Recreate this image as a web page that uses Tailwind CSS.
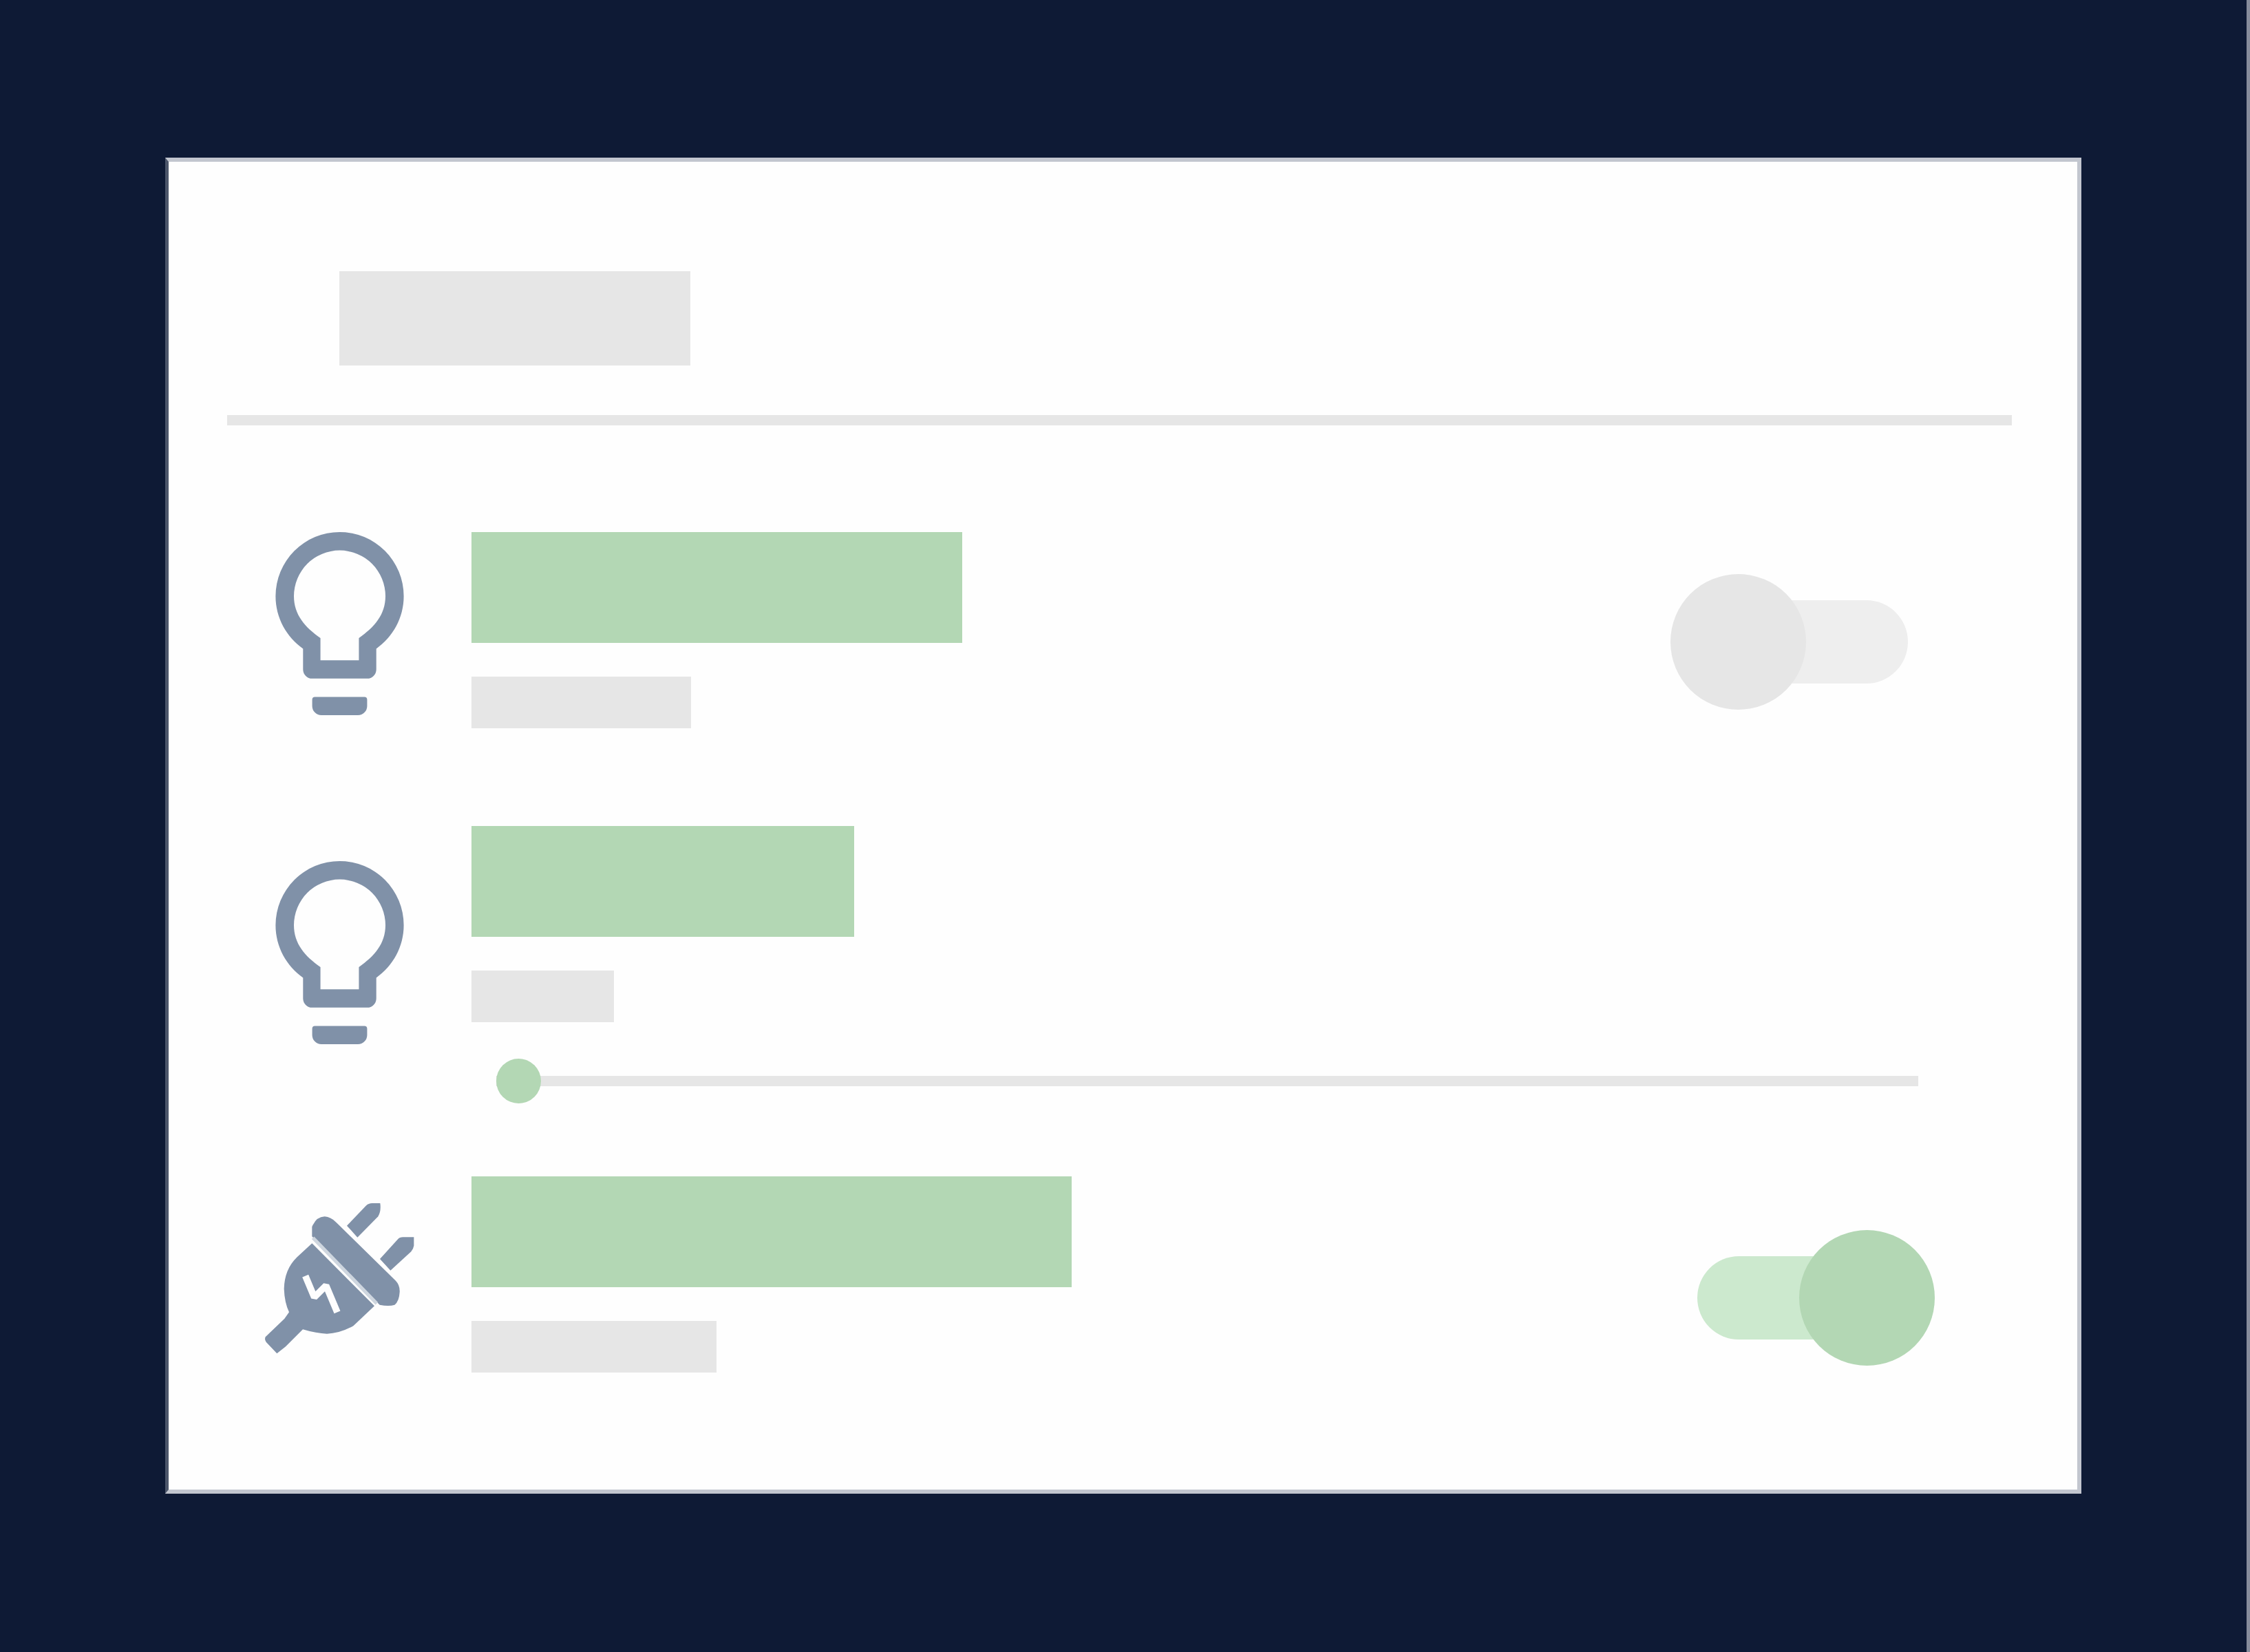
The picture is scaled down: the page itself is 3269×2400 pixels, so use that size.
<!DOCTYPE html>
<html lang="en">
<head>
<meta charset="utf-8">
<meta name="viewport" content="width=device-width, initial-scale=1">
<title>Devices</title>
<script src="https://cdn.jsdelivr.net/npm/@tailwindcss/browser@4"></script>
</head>
<body class="min-h-screen border-r-5 border-[#868c9b] bg-[#0e1a35] px-[240px] pt-[229px] pb-[220px] font-['Inter',sans-serif]">
  <svg class="hidden" aria-hidden="true">
    <symbol id="bulb" viewBox="5 2 14 20">
      <path d="M12,2A7,7 0 0,1 19,9C19,11.38 17.81,13.47 16,14.74V17A1,1 0 0,1 15,18H9A1,1 0 0,1 8,17V14.74C6.19,13.47 5,11.38 5,9A7,7 0 0,1 12,2M9,21V20.3Q9,20 9.3,20H14.7Q15,20 15,20.3V21A1,1 0 0,1 14,22H10A1,1 0 0,1 9,21M12,4A5,5 0 0,0 7,9C7,11.05 8.23,12.41 9.9,13.58V16H14.1V13.58C15.77,12.41 17,11.05 17,9A5,5 0 0,0 12,4Z"/>
    </symbol>
  </svg>
  <main class="border-6 border-l-5 border-[#c2c6cf] border-l-[#4c566b] bg-[#fefefe] pt-[159px] pb-[170px] pl-[85px]">
    <header class="mr-[95px] border-b-15 border-[#e6e6e6] pb-[72px] pl-[163px]">
      <div class="h-[137px] w-[510px] bg-[#e6e6e6]"></div>
    </header>

    <section class="flex items-start gap-[29px] pt-[155px] pr-[246px]">
      <div class="flex w-[326px] shrink-0 justify-center">
        <svg class="h-[266px] w-[187px] fill-[#8091a8]" aria-hidden="true"><use href="#bulb"/></svg>
      </div>
      <div class="flex min-w-0 flex-1 flex-col gap-[49px]">
        <div class="h-[161px] w-[713px] bg-[#b3d7b4]"></div>
        <div class="h-[75px] w-[319px] bg-[#e6e6e6]"></div>
      </div>
      <input type="checkbox" role="switch" aria-label="Light" class="mt-[61px] grid h-[197px] w-[345px] shrink-0 appearance-none items-center before:col-start-1 before:row-start-1 before:h-[121px] before:w-[247px] before:justify-self-end before:rounded-full before:bg-[#eeeeee] after:col-start-1 after:row-start-1 after:size-[197px] after:justify-self-start after:rounded-full after:bg-[#e6e6e6] checked:before:justify-self-start checked:before:bg-[#cce9ce] checked:after:justify-self-end checked:after:bg-[#b3d7b4]">
    </section>

    <section class="flex items-start gap-[29px] pt-[142px] pr-[231px]">
      <div class="mt-[51px] flex w-[326px] shrink-0 justify-center">
        <svg class="h-[266px] w-[187px] fill-[#8091a8]" aria-hidden="true"><use href="#bulb"/></svg>
      </div>
      <div class="flex min-w-0 flex-1 flex-col gap-[49px]">
        <div class="h-[161px] w-[556px] bg-[#b3d7b4]"></div>
        <div class="h-[75px] w-[207px] bg-[#e6e6e6]"></div>
        <input type="range" min="0" max="100" value="0" aria-label="Brightness" class="mt-1 ml-9 h-[65px] appearance-none bg-transparent [&::-webkit-slider-runnable-track]:h-[15px] [&::-webkit-slider-runnable-track]:bg-[#e6e6e6] [&::-webkit-slider-thumb]:-mt-[25px] [&::-webkit-slider-thumb]:size-[65px] [&::-webkit-slider-thumb]:appearance-none [&::-webkit-slider-thumb]:rounded-full [&::-webkit-slider-thumb]:bg-[#b3d7b4]">
      </div>
    </section>

    <section class="flex items-start gap-[29px] pt-[106px] pr-[207px]">
      <div class="mt-[39px] flex w-[326px] shrink-0 justify-center">
        <svg class="size-[219px] fill-[#8091a8]" viewBox="72 87 657 657" aria-hidden="true">
          <path d="M432 185 L515 98 Q526 87 542 87 H577 Q582 122 568 145 L478 236 Z"/>
          <path d="M576 330 L655 243 Q662 235 676 235 H724 V272 Q722 285 712 298 L622 380 Z"/>
          <path d="M280 232 V190 Q298 146 335 145 Q362 147 385 170 L645 425 Q664 445 662 475 Q660 515 640 530 Q615 538 575 530 Z"/>
          <path d="M280 262 L215 322 Q160 375 158 460 Q160 520 180 562 L160 590 L77 670 Q72 682 80 692 L127 742 L165 712 L240 637 Q300 655 345 656 Q400 655 460 622 L552 535 Z"/>
          <path d="M284 238 L562 524" stroke="#ced6df" stroke-width="15"/>
          <path fill="none" stroke="#fefefe" stroke-width="29" stroke-linejoin="bevel" d="M251 404 L290 497 L341 446 L390 562"/>
        </svg>
      </div>
      <div class="flex min-w-0 flex-1 flex-col gap-[49px]">
        <div class="h-[161px] w-[872px] bg-[#b3d7b4]"></div>
        <div class="h-[75px] w-[356px] bg-[#e6e6e6]"></div>
      </div>
      <input type="checkbox" role="switch" checked aria-label="Plug" class="mt-[78px] grid h-[197px] w-[345px] shrink-0 appearance-none items-center before:col-start-1 before:row-start-1 before:h-[121px] before:w-[247px] before:justify-self-end before:rounded-full before:bg-[#eeeeee] after:col-start-1 after:row-start-1 after:size-[197px] after:justify-self-start after:rounded-full after:bg-[#e6e6e6] checked:before:justify-self-start checked:before:bg-[#cce9ce] checked:after:justify-self-end checked:after:bg-[#b3d7b4]">
    </section>
  </main>
</body>
</html>
